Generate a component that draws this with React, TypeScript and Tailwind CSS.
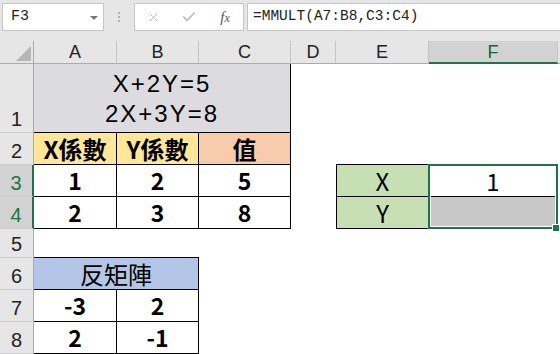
import { Check, X } from "lucide-react";

const cjk = "font-['Noto_Sans_CJK_TC','Noto_Sans',sans-serif]";
const line = "border-black";

const colHeaders = [
    { label: "A", cls: "col-start-2" },
    { label: "B", cls: "col-start-3" },
    { label: "C", cls: "col-start-4" },
    { label: "D", cls: "col-start-5" },
    { label: "E", cls: "col-start-6" },
];

const rowHeaders = [
    { label: "1", cls: "row-start-2", sel: false },
    { label: "2", cls: "row-start-3", sel: false },
    { label: "3", cls: "row-start-4", sel: true },
    { label: "4", cls: "row-start-5", sel: true },
    { label: "5", cls: "row-start-6", sel: false },
    { label: "6", cls: "row-start-7", sel: false },
    { label: "7", cls: "row-start-8", sel: false },
    { label: "8", cls: "row-start-9", sel: false },
];

function FormulaBar() {
    return (
        <div className="flex h-[41px] items-start bg-[#e6e6e6] pt-[3px] font-['Liberation_Mono',monospace] text-[#222]">
            <div className="ml-[2px] flex h-[28px] w-[102px] items-center justify-between border border-[#c6c6c6] bg-white pl-[8px] pr-[5px] text-[15px]">
                <span>F3</span>
                <span className="mt-[1px] border-x-[4px] border-t-[4px] border-x-transparent border-t-[#777]" />
            </div>
            <div className="ml-[14px] mt-[9px] flex flex-col gap-[2px]">
                <span className="size-[2px] bg-[#b0b0b0]" />
                <span className="size-[2px] bg-[#b0b0b0]" />
                <span className="size-[2px] bg-[#b0b0b0]" />
            </div>
            <div className="ml-[14px] flex h-[28px] w-[110px] items-center border border-[#c6c6c6] bg-white">
                <span className="flex w-[36px] justify-center text-[#b4b4b4]">
                    <X size={13} strokeWidth={1.4} />
                </span>
                <span className="flex w-[36px] justify-center text-[#bdbdbd]">
                    <Check size={16} strokeWidth={2.6} />
                </span>
                <span className="flex w-[36px] items-baseline justify-center font-['Liberation_Serif',serif] text-[15px] italic text-[#555]">
                    f<span className="text-[12px]">x</span>
                </span>
            </div>
            <div className="ml-[3px] flex h-[28px] flex-1 items-center border border-r-0 border-[#c6c6c6] bg-white pl-[5px] text-[14.5px]">
                =MMULT(A7:B8,C3:C4)
            </div>
        </div>
    );
}

function Sheet() {
    return (
        <div className="grid grid-cols-[34px_83px_82px_92px_45px_93px_129px_1fr] grid-rows-[23px_69px_32px_32px_32px_29px_32px_32px_32px] text-black">
            {/* corner */}
            <div className="col-start-1 row-start-1 flex items-end justify-end border-b border-r border-[#ababab] bg-[#e6e6e6] pb-[2px] pr-[2px]">
                <svg width="15" height="15" viewBox="0 0 15 15">
                    <polygon points="15,0 15,15 0,15" fill="#b6b6b6" />
                </svg>
            </div>

            {/* column headers */}
            {colHeaders.map((c) => (
                <div
                    key={c.label}
                    className={`${c.cls} row-start-1 flex items-center justify-center border-b border-r border-b-[#ababab] border-r-[#c4c4c4] bg-[#e6e6e6] font-['Liberation_Sans',sans-serif] text-[18px] text-[#222]`}
                >
                    {c.label}
                </div>
            ))}
            <div className="col-start-7 row-start-1 flex items-center justify-center border-b-2 border-r border-b-[#217346] border-r-[#c4c4c4] bg-[#d2d2d2] pt-[1px] font-['Liberation_Sans',sans-serif] text-[18px] text-[#1d5f3b]">
                F
            </div>
            <div className="col-start-8 row-start-1 border-b border-[#ababab] bg-[#e6e6e6]" />

            {/* row headers */}
            {rowHeaders.map((r) => (
                <div
                    key={r.label}
                    className={`col-start-1 ${r.cls} flex items-end justify-center border-b border-b-[#cdcdcd] pb-[3px] font-['Liberation_Sans',sans-serif] text-[20px] leading-none ${
                        r.sel
                            ? "border-r-2 border-r-[#217346] bg-[#d2d2d2] text-[#217346]"
                            : "border-r border-r-[#ababab] bg-[#e6e6e6] text-[#222]"
                    }`}
                >
                    {r.label}
                </div>
            ))}

            {/* row 1 */}
            <div className={`col-span-3 col-start-2 row-start-2 flex flex-col items-center justify-end border-b border-r ${line} bg-[#dcdce0] pb-[3px] font-['Liberation_Sans',sans-serif] text-[24px] leading-[30px] tracking-[2px]`}>
                <span>X+2Y=5</span>
                <span>2X+3Y=8</span>
            </div>

            {/* row 2 */}
            <div className={`col-start-2 row-start-3 flex items-center justify-center border-b border-r ${line} bg-[#ffe699] ${cjk} text-[24px] font-bold`}>X係數</div>
            <div className={`col-start-3 row-start-3 flex items-center justify-center border-b border-r ${line} bg-[#ffe699] ${cjk} text-[24px] font-bold`}>Y係數</div>
            <div className={`col-start-4 row-start-3 flex items-center justify-center border-b border-r ${line} bg-[#f8cbad] ${cjk} text-[24px] font-bold`}>值</div>
            <div className={`col-start-6 row-start-3 border-b ${line}`} />
            <div className={`col-start-7 row-start-3 border-b ${line}`} />

            {/* rows 3-4 */}
            {[
                ["1", "2", "5"],
                ["2", "3", "8"],
            ].map((vals, i) =>
                vals.map((v, j) => (
                    <div
                        key={`${i}-${j}`}
                        className={`${i === 0 ? "row-start-4" : "row-start-5"} ${j === 0 ? "col-start-2" : j === 1 ? "col-start-3" : "col-start-4"} flex items-center justify-center border-b border-r ${line} ${cjk} text-[23px] font-bold`}
                    >
                        {v}
                    </div>
                ))
            )}
            <div className={`col-start-6 row-start-4 flex items-center justify-center border-b border-l border-r ${line} bg-[#c6e0b4] ${cjk} text-[24px]`}>X</div>
            <div className={`col-start-6 row-start-5 flex items-center justify-center border-b border-l border-r ${line} bg-[#c6e0b4] ${cjk} text-[24px]`}>Y</div>
            <div className={`col-start-7 row-start-4 flex items-center justify-center border-b border-r ${line} ${cjk} text-[24px]`}>1</div>
            <div className={`col-start-7 row-start-5 border-b border-r ${line} bg-[#c8c8c8]`} />

            {/* row 5 */}
            <div className={`col-start-2 row-start-6 border-b ${line}`} />
            <div className={`col-start-3 row-start-6 border-b ${line}`} />

            {/* rows 6-8 */}
            <div className={`col-span-2 col-start-2 row-start-7 flex items-center justify-center border-b border-r ${line} bg-[#b4c6e7] ${cjk} text-[24px]`}>反矩陣</div>
            {[
                ["-3", "2"],
                ["2", "-1"],
            ].map((vals, i) =>
                vals.map((v, j) => (
                    <div
                        key={`inv-${i}-${j}`}
                        className={`${i === 0 ? "row-start-8" : "row-start-9"} ${j === 0 ? "col-start-2" : "col-start-3"} flex items-center justify-center border-b border-r ${line} ${cjk} text-[23px] font-bold`}
                    >
                        {v}
                    </div>
                ))
            )}
        </div>
    );
}

function Selection() {
    return (
        <>
            <div className="absolute left-[428px] top-[164px] h-[65px] w-[130px] border-2 border-[#217346]">
                <div className="h-full w-full border border-white" />
            </div>
            <div className="absolute left-[552px] top-[224px] size-[8px] border border-white bg-[#217346]" />
        </>
    );
}

export default function App() {
    return (
        <div className="relative h-[354px] w-[560px] overflow-hidden bg-white">
            <FormulaBar />
            <Sheet />
            <Selection />
        </div>
    );
}
